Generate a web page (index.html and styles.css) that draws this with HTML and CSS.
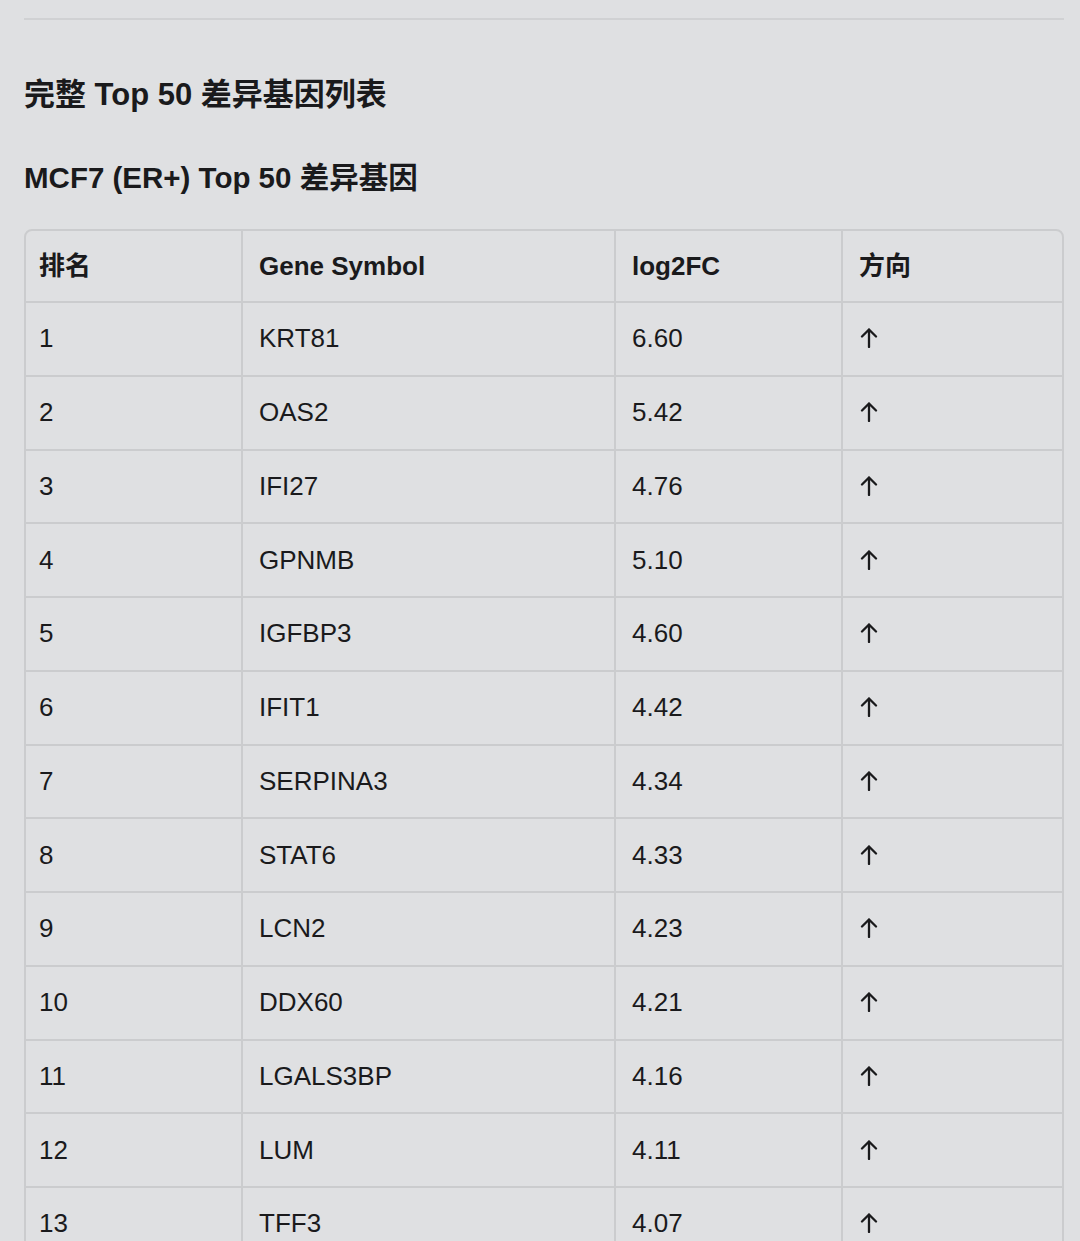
FILE: index.html
```html
<!DOCTYPE html>
<html lang="zh">
<head>
<meta charset="utf-8">
<title>Top 50 差异基因列表</title>
<link rel="stylesheet" href="styles.css">
</head>
<body>
<main class="page">
  <div class="rule"></div>
  <h1 class="title">完整 Top 50 差异基因列表</h1>
  <h2 class="subtitle">MCF7 (ER+) Top 50 差异基因</h2>
  <div class="table-wrap">
    <table class="genes">
      <colgroup>
        <col class="c-rank">
        <col class="c-gene">
        <col class="c-fc">
        <col class="c-dir">
      </colgroup>
      <thead>
        <tr><th>排名</th><th>Gene Symbol</th><th>log2FC</th><th>方向</th></tr>
      </thead>
      <tbody>
        <tr><td>1</td><td>KRT81</td><td>6.60</td><td class="dir"><svg class="up" viewBox="0 0 18 20" aria-label="↑"><path d="M9 1.5V19M2 8.5L9 1.5L16 8.5"/></svg></td></tr>
        <tr><td>2</td><td>OAS2</td><td>5.42</td><td class="dir"><svg class="up" viewBox="0 0 18 20" aria-label="↑"><path d="M9 1.5V19M2 8.5L9 1.5L16 8.5"/></svg></td></tr>
        <tr><td>3</td><td>IFI27</td><td>4.76</td><td class="dir"><svg class="up" viewBox="0 0 18 20" aria-label="↑"><path d="M9 1.5V19M2 8.5L9 1.5L16 8.5"/></svg></td></tr>
        <tr><td>4</td><td>GPNMB</td><td>5.10</td><td class="dir"><svg class="up" viewBox="0 0 18 20" aria-label="↑"><path d="M9 1.5V19M2 8.5L9 1.5L16 8.5"/></svg></td></tr>
        <tr><td>5</td><td>IGFBP3</td><td>4.60</td><td class="dir"><svg class="up" viewBox="0 0 18 20" aria-label="↑"><path d="M9 1.5V19M2 8.5L9 1.5L16 8.5"/></svg></td></tr>
        <tr><td>6</td><td>IFIT1</td><td>4.42</td><td class="dir"><svg class="up" viewBox="0 0 18 20" aria-label="↑"><path d="M9 1.5V19M2 8.5L9 1.5L16 8.5"/></svg></td></tr>
        <tr><td>7</td><td>SERPINA3</td><td>4.34</td><td class="dir"><svg class="up" viewBox="0 0 18 20" aria-label="↑"><path d="M9 1.5V19M2 8.5L9 1.5L16 8.5"/></svg></td></tr>
        <tr><td>8</td><td>STAT6</td><td>4.33</td><td class="dir"><svg class="up" viewBox="0 0 18 20" aria-label="↑"><path d="M9 1.5V19M2 8.5L9 1.5L16 8.5"/></svg></td></tr>
        <tr><td>9</td><td>LCN2</td><td>4.23</td><td class="dir"><svg class="up" viewBox="0 0 18 20" aria-label="↑"><path d="M9 1.5V19M2 8.5L9 1.5L16 8.5"/></svg></td></tr>
        <tr><td>10</td><td>DDX60</td><td>4.21</td><td class="dir"><svg class="up" viewBox="0 0 18 20" aria-label="↑"><path d="M9 1.5V19M2 8.5L9 1.5L16 8.5"/></svg></td></tr>
        <tr><td>11</td><td>LGALS3BP</td><td>4.16</td><td class="dir"><svg class="up" viewBox="0 0 18 20" aria-label="↑"><path d="M9 1.5V19M2 8.5L9 1.5L16 8.5"/></svg></td></tr>
        <tr><td>12</td><td>LUM</td><td>4.11</td><td class="dir"><svg class="up" viewBox="0 0 18 20" aria-label="↑"><path d="M9 1.5V19M2 8.5L9 1.5L16 8.5"/></svg></td></tr>
        <tr><td>13</td><td>TFF3</td><td>4.07</td><td class="dir"><svg class="up" viewBox="0 0 18 20" aria-label="↑"><path d="M9 1.5V19M2 8.5L9 1.5L16 8.5"/></svg></td></tr>
      </tbody>
    </table>
  </div>
</main>
</body>
</html>
```

FILE: styles.css
```css
html, body {
  margin: 0;
  padding: 0;
  background: #dfe0e2;
}

body {
  font-family: "Liberation Sans", "Noto Sans CJK SC", sans-serif;
  color: #1a1a1c;
}

.page {
  padding: 18px 16px 0 24px;
}

.rule {
  height: 2px;
  background: #d0d1d3;
}

.title {
  margin: 55px 0 0;
  font-size: 31px;
  line-height: 40px;
  font-weight: 700;
}

.subtitle {
  margin: 44px 0 0;
  font-size: 29.5px;
  line-height: 38px;
  font-weight: 700;
}

.table-wrap {
  margin-top: 32px;
  border: 2px solid #cbccce;
  border-radius: 8px;
  overflow: hidden;
}

.genes {
  width: 100%;
  border-collapse: separate;
  border-spacing: 0;
  table-layout: fixed;
}

.c-rank { width: 215px; }
.c-gene { width: 373px; }
.c-fc { width: 227px; }
.c-dir { width: 221px; }

.genes th,
.genes td {
  text-align: left;
  padding: 0 16px 1px;
  font-size: 26px;
  line-height: 30px;
  border-bottom: 2px solid #cbccce;
  border-left: 2px solid #cbccce;
}

.genes th:first-child,
.genes td:first-child {
  border-left: none;
  padding-left: 13px;
}

.genes thead tr {
  height: 72px;
}

.genes tbody tr {
  height: 73.75px;
}

.genes th {
  font-weight: 700;
}

.genes td.dir {
  padding-left: 17px;
}

.up {
  display: block;
  width: 18px;
  height: 20px;
  fill: none;
  stroke: #1a1a1c;
  stroke-width: 2.3;
  stroke-linecap: round;
  stroke-linejoin: round;
}
```
